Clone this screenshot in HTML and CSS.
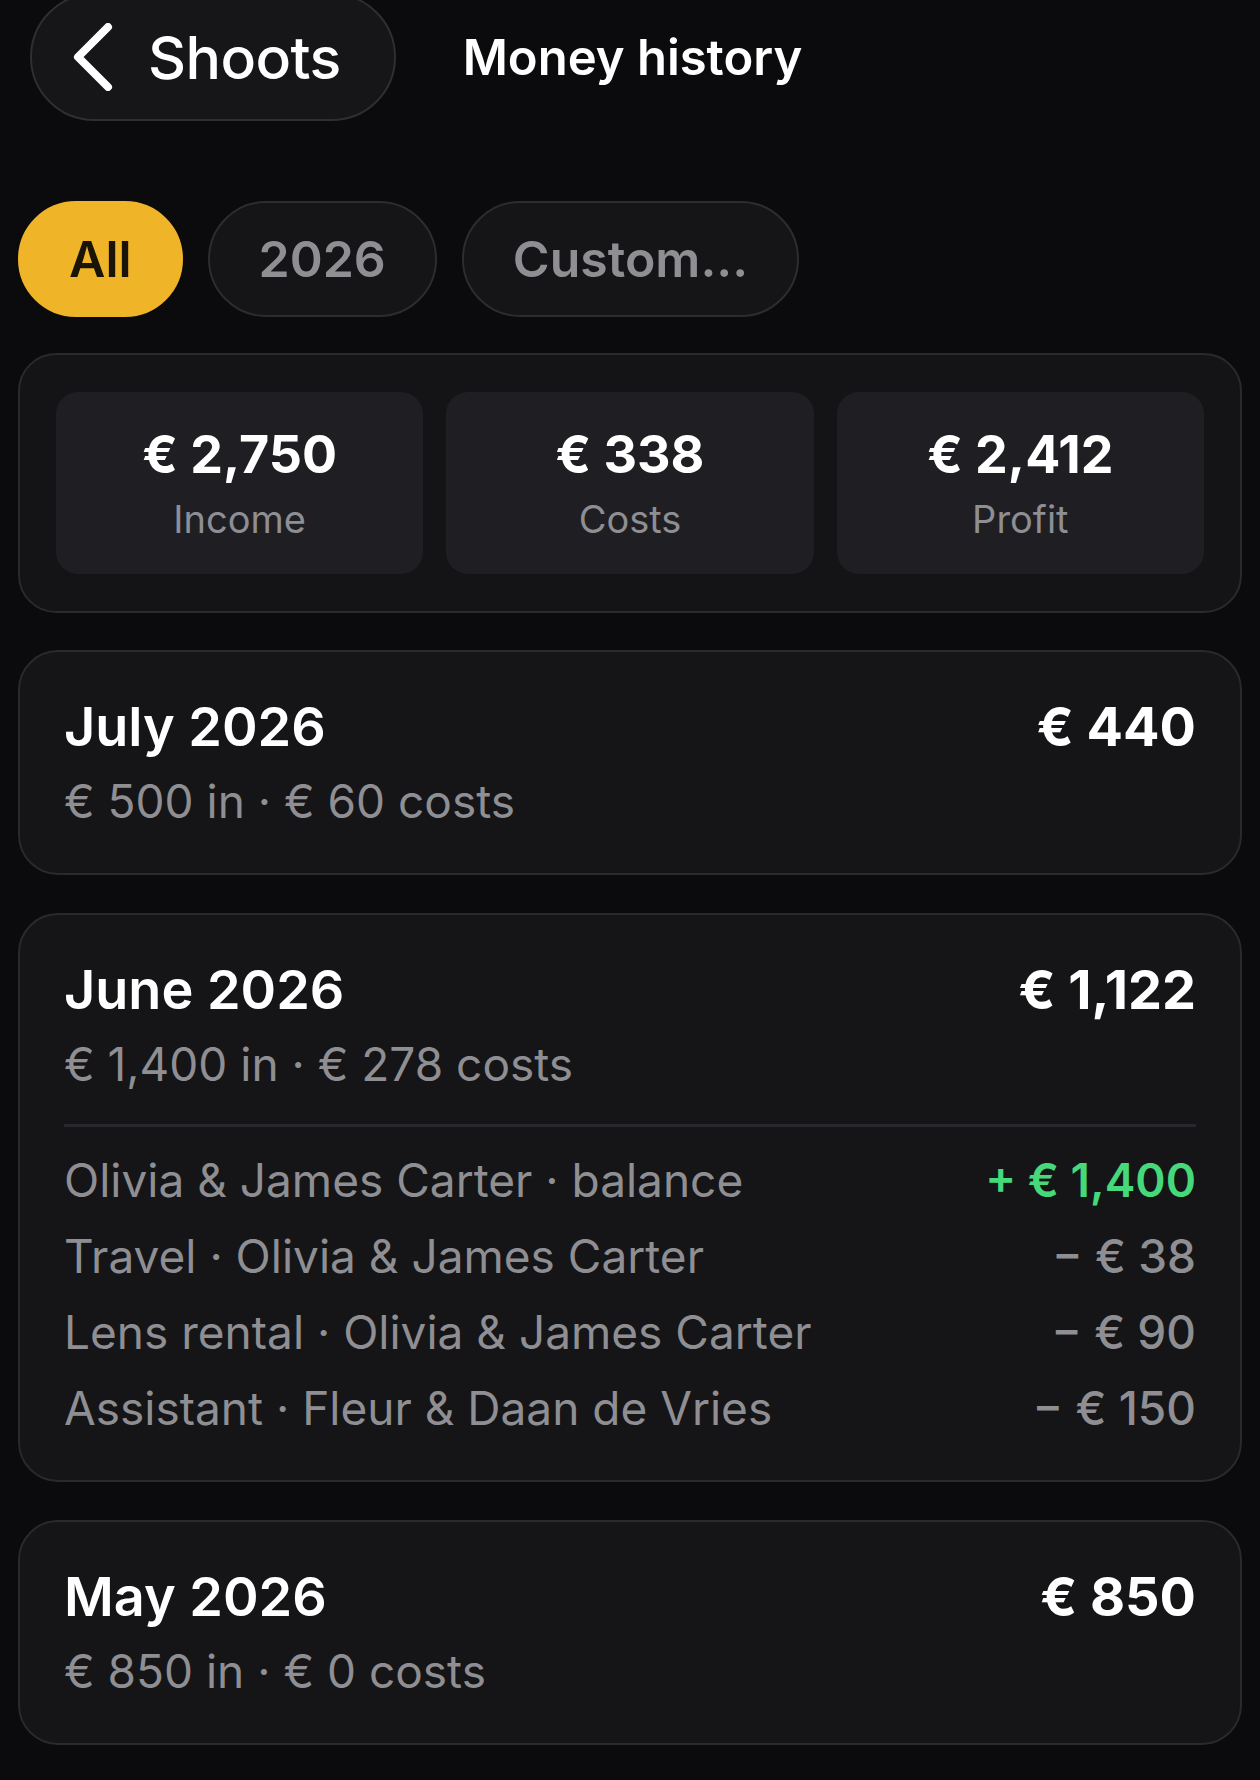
FILE: index.html
```html
<!DOCTYPE html>
<html lang="en">
<head>
  <meta charset="UTF-8" />
  <meta name="viewport" content="width=device-width, initial-scale=1.0"/>
  <title>Money history</title>
  <link rel="stylesheet" href="styles.css">
</head>
<body>

  <div class="page">

    <!-- Barra de topo -->
    <div class="topbar">
      <button class="back">
        <svg class="chevron" width="42" height="68" viewBox="0 0 42 68">
          <path d="M36 4L6 34L36 64" fill="none" stroke="#fff" stroke-width="8" stroke-linecap="round" stroke-linejoin="round"/>
        </svg>
        <span>Shoots</span>
      </button>
      <h1 class="title">Money history</h1>
    </div>

    <!-- Filtros -->
    <div class="filters">
      <button class="chip active">All</button>
      <button class="chip">2026</button>
      <button class="chip">Custom...</button>
    </div>

    <!-- Resumo -->
    <div class="summary">
      <div class="tile">
        <div class="tile-value">€ 2,750</div>
        <div class="tile-label">Income</div>
      </div>
      <div class="tile">
        <div class="tile-value">€ 338</div>
        <div class="tile-label">Costs</div>
      </div>
      <div class="tile">
        <div class="tile-value">€ 2,412</div>
        <div class="tile-label">Profit</div>
      </div>
    </div>

    <!-- Meses -->
    <div class="months">
      <div class="month">
        <div class="month-head">
          <span class="month-name">July 2026</span>
          <span class="month-total">€ 440</span>
        </div>
        <div class="month-sub">€ 500 in · € 60 costs</div>
      </div>

      <div class="month">
        <div class="month-head">
          <span class="month-name">June 2026</span>
          <span class="month-total">€ 1,122</span>
        </div>
        <div class="month-sub">€ 1,400 in · € 278 costs</div>
        <div class="divider"></div>
        <div class="entries">
          <div class="entry">
            <span>Olivia &amp; James Carter · balance</span>
            <span class="amount plus">+ € 1,400</span>
          </div>
          <div class="entry">
            <span>Travel · Olivia &amp; James Carter</span>
            <span class="amount">− € 38</span>
          </div>
          <div class="entry">
            <span>Lens rental · Olivia &amp; James Carter</span>
            <span class="amount">− € 90</span>
          </div>
          <div class="entry">
            <span>Assistant · Fleur &amp; Daan de Vries</span>
            <span class="amount">− € 150</span>
          </div>
        </div>
      </div>

      <div class="month">
        <div class="month-head">
          <span class="month-name">May 2026</span>
          <span class="month-total">€ 850</span>
        </div>
        <div class="month-sub">€ 850 in · € 0 costs</div>
      </div>
    </div>

  </div>

</body>
</html>
```

FILE: styles.css
```css
body {
  font-family: Inter, "Noto Sans", sans-serif;
  background-color: #0b0b0d;
  color: #fff;
  margin: 0;
  overflow: hidden;
}

.page {
  padding: 0 18px;
}

button {
  font-family: inherit;
  cursor: pointer;
}

/* Barra de topo */
.topbar {
  display: flex;
  align-items: center;
  gap: 67px;
  margin-top: -7px;
}

.back {
  display: flex;
  align-items: center;
  gap: 34px;
  height: 128px;
  margin-left: 12px;
  padding: 0 53px 0 40px;
  border: 2px solid #2e2e33;
  border-radius: 64px;
  background-color: #161618;
  color: #fff;
  font-size: 59px;
  font-weight: 500;
  letter-spacing: -0.6px;
}

.chevron {
  display: block;
}

.title {
  margin: 0;
  font-size: 49px;
  font-weight: 600;
}

/* Filtros */
.filters {
  display: flex;
  gap: 25px;
  margin-top: 80px;
}

.chip {
  height: 116px;
  padding: 0 49px;
  border: 2px solid #2c2c31;
  border-radius: 58px;
  background-color: #151517;
  color: #8e8e93;
  font-size: 50px;
  font-weight: 600;
}

.chip.active {
  background-color: #f0b429;
  border-color: #f0b429;
  color: #1a1406;
}

/* Resumo */
.summary {
  display: grid;
  grid-template-columns: repeat(3, 1fr);
  gap: 23px;
  margin-top: 36px;
  padding: 37px 36px;
  border: 2px solid #29292e;
  border-radius: 38px;
  background-color: #141416;
}

.tile {
  padding: 32px 0;
  border-radius: 22px;
  background-color: #1f1f23;
  text-align: center;
}

.tile-value {
  font-size: 52px;
  font-weight: 700;
  line-height: 62px;
}

.tile-label {
  margin-top: 10px;
  color: #8e8e93;
  font-size: 38px;
  line-height: 46px;
}

/* Meses */
.months {
  display: flex;
  flex-direction: column;
  gap: 38px;
  margin-top: 37px;
}

.month {
  padding: 42px 44px 44px;
  border: 2px solid #29292e;
  border-radius: 40px;
  background-color: #151517;
}

.month-head {
  display: flex;
  justify-content: space-between;
  align-items: baseline;
  font-size: 54px;
  line-height: 65px;
}

.month-name {
  font-weight: 600;
}

.month-total {
  font-weight: 700;
}

.month-sub {
  margin-top: 15px;
  color: #8e8e93;
  font-size: 46px;
  line-height: 55px;
}

.divider {
  height: 3px;
  margin: 32px 0 26px;
  background-color: #28272e;
}

.entries {
  display: flex;
  flex-direction: column;
  gap: 21px;
}

.entry {
  display: flex;
  justify-content: space-between;
  color: #8e8e93;
  font-size: 46px;
  line-height: 55px;
}

.amount {
  font-weight: 500;
}

.amount.plus {
  color: #45d97b;
  font-weight: 600;
}
```
